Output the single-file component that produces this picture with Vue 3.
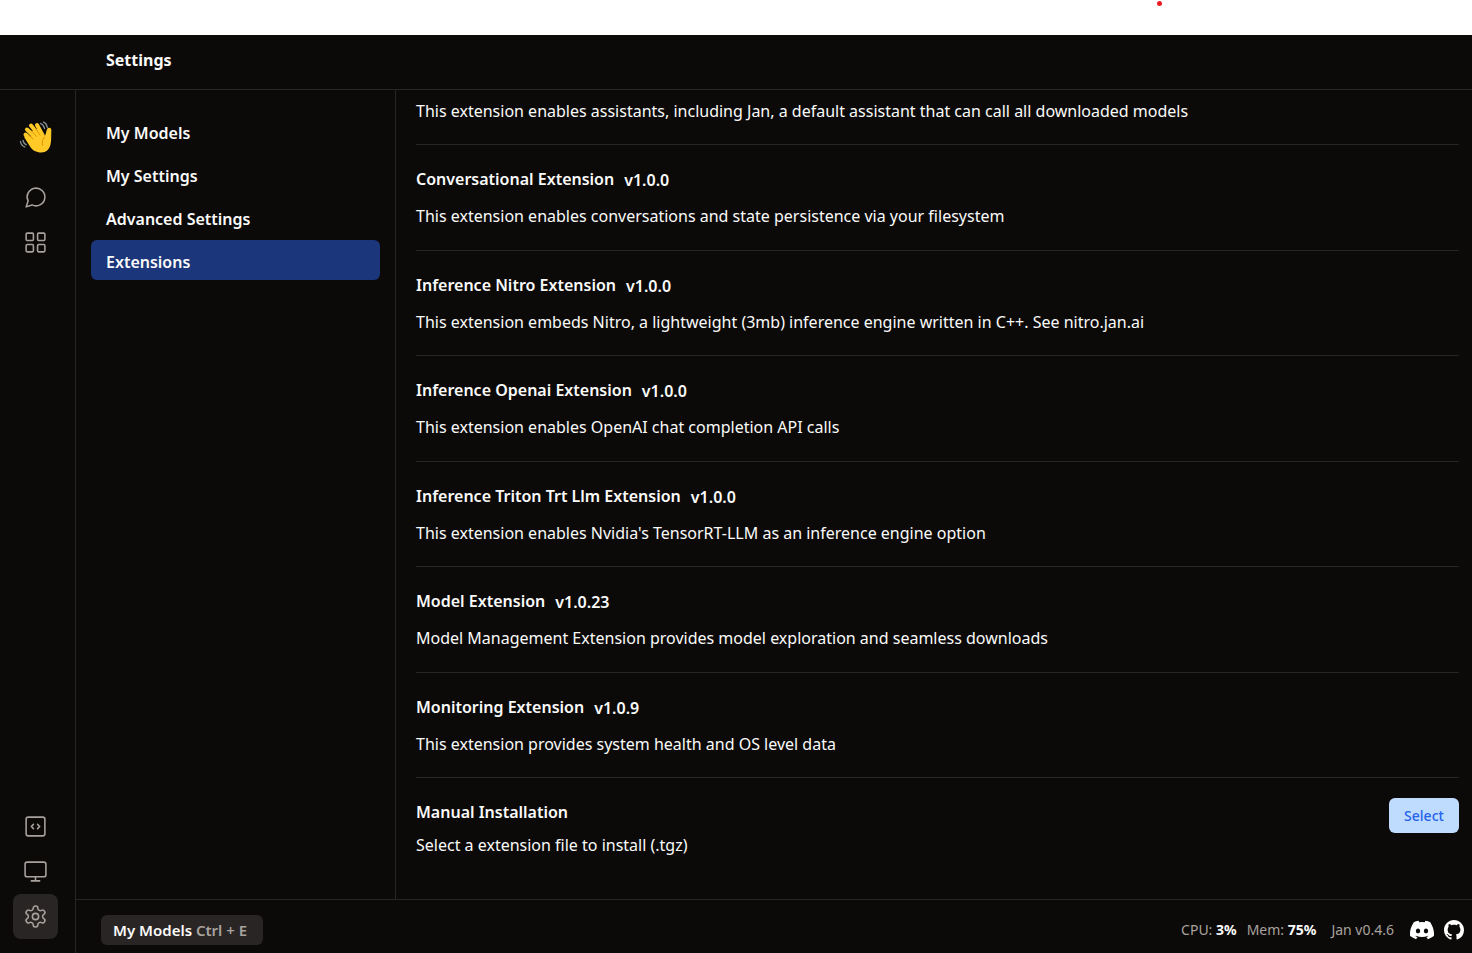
<script setup>
const sections = ['My Models', 'My Settings', 'Advanced Settings', 'Extensions']
const active = 'Extensions'

const extensions = [
  { name: 'Conversational Extension', version: 'v1.0.0', text: 'This extension enables conversations and state persistence via your filesystem' },
  { name: 'Inference Nitro Extension', version: 'v1.0.0', text: 'This extension embeds Nitro, a lightweight (3mb) inference engine written in C++. See nitro.jan.ai' },
  { name: 'Inference Openai Extension', version: 'v1.0.0', text: 'This extension enables OpenAI chat completion API calls' },
  { name: 'Inference Triton Trt Llm Extension', version: 'v1.0.0', text: "This extension enables Nvidia's TensorRT-LLM as an inference engine option" },
  { name: 'Model Extension', version: 'v1.0.23', text: 'Model Management Extension provides model exploration and seamless downloads' },
  { name: 'Monitoring Extension', version: 'v1.0.9', text: 'This extension provides system health and OS level data' },
]
</script>

<template>
  <div class="window">
    <div class="strip"><span class="dot"></span></div>
    <header class="titlebar"><h1>Settings</h1></header>
    <div class="shell">
      <nav class="rail" aria-label="Main">
        <div class="group">
          <div class="wave">
            <svg width="34" height="34" viewBox="0 0 34 34" aria-hidden="true">
              <g fill="none" stroke="#ffc928" stroke-width="4" stroke-linecap="round">
                <path d="M6.500 14.500 16 23" />
                <path d="M8 9.500 18 19" />
                <path d="M12 5.500 21 16.500" />
                <path d="M18 5 24 16" />
              </g>
              <path fill="#ffc928" d="M6 18.500C4.200 16.500 6.500 14.300 8.600 15.800L13 19 11 12 19 9 24.500 18.500C26 16.500 26.800 14 27.500 10.800C28 8.400 29.200 7.400 30.600 7.800C32.400 8.300 32.500 10 32.300 12C32 16 32.600 20 31.500 24.500C30.200 29.600 27 32.500 22.500 32.500C17 32.500 13.500 30 11.500 27.200Z" />
              <g fill="none" stroke="#e59600" stroke-width="1" stroke-linecap="round">
                <path d="m9.500 15 4.500 4M12 10.500l5.500 6M16.500 8.500l4.500 6.500" />
                <path d="M25.500 17.500C23.600 19 22.800 21.500 23.500 25.500" />
              </g>
              <g fill="none" stroke="#8a9499" stroke-width="1.300" stroke-linecap="round">
                <path d="M21.500 3.500c2.200.8 3.600 2.600 4 5M24.500 2.200c2.200 1 3.500 2.800 3.700 5.300M1.500 21.500c.4 2.600 1.900 4.500 4.300 5.500M4 20.500c.4 2 1.500 3.400 3.200 4.200" />
              </g>
            </svg>
          </div>
          <button class="icon" type="button" aria-label="Thread">
            <svg class="line" viewBox="0 0 24 24"><path d="m3 21 1.900-5.700a8.500 8.500 0 1 1 3.800 3.800z" /></svg>
          </button>
          <button class="icon" type="button" aria-label="Hub">
            <svg class="line" viewBox="0 0 24 24"><rect x="3" y="3" width="7" height="7" rx="1" /><rect x="14" y="3" width="7" height="7" rx="1" /><rect x="14" y="14" width="7" height="7" rx="1" /><rect x="3" y="14" width="7" height="7" rx="1" /></svg>
          </button>
        </div>
        <div class="group">
          <button class="icon" type="button" aria-label="Local API Server">
            <svg class="line" viewBox="0 0 24 24"><rect x="3" y="3" width="18" height="18" rx="2" /><path d="m10 10-2 2 2 2M14 14l2-2-2-2" /></svg>
          </button>
          <button class="icon" type="button" aria-label="System Monitor">
            <svg class="line" viewBox="0 0 24 24"><rect x="2" y="3" width="20" height="14" rx="2" /><path d="M8 21h8M12 17v4" /></svg>
          </button>
          <button class="icon current" type="button" aria-label="Settings">
            <svg class="line" viewBox="0 0 24 24"><path d="M12.220 2h-.44a2 2 0 0 0-2 2v.18a2 2 0 0 1-1 1.730l-.43.25a2 2 0 0 1-2 0l-.15-.08a2 2 0 0 0-2.730.73l-.22.38a2 2 0 0 0 .73 2.730l.15.1a2 2 0 0 1 1 1.720v.51a2 2 0 0 1-1 1.740l-.15.09a2 2 0 0 0-.73 2.730l.22.38a2 2 0 0 0 2.730.73l.15-.08a2 2 0 0 1 2 0l.43.25a2 2 0 0 1 1 1.730V20a2 2 0 0 0 2 2h.44a2 2 0 0 0 2-2v-.18a2 2 0 0 1 1-1.730l.43-.25a2 2 0 0 1 2 0l.15.08a2 2 0 0 0 2.730-.73l.22-.39a2 2 0 0 0-.73-2.730l-.15-.08a2 2 0 0 1-1-1.740v-.5a2 2 0 0 1 1-1.740l.15-.09a2 2 0 0 0 .73-2.730l-.22-.38a2 2 0 0 0-2.730-.73l-.15.08a2 2 0 0 1-2 0l-.43-.25a2 2 0 0 1-1-1.730V4a2 2 0 0 0-2-2z" /><circle cx="12" cy="12" r="3" /></svg>
          </button>
        </div>
      </nav>

      <div class="main">
        <div class="columns">
          <nav class="sections" aria-label="Settings sections">
            <button v-for="s in sections" :key="s" type="button" :class="{ on: s === active }">{{ s }}</button>
          </nav>
          <main class="content">
            <p class="first">This extension enables assistants, including Jan, a default assistant that can call all downloaded models</p>
            <div class="list">
              <article v-for="e in extensions" :key="e.name">
                <div class="name"><h2>{{ e.name }}</h2><span>{{ e.version }}</span></div>
                <p>{{ e.text }}</p>
              </article>
            </div>
            <section class="manual">
              <div>
                <h2>Manual Installation</h2>
                <p>Select a extension file to install (.tgz)</p>
              </div>
              <button type="button">Select</button>
            </section>
          </main>
        </div>
        <footer class="status">
          <button class="shortcut" type="button">My Models <span>Ctrl + E</span></button>
          <div class="stats">
            <span>CPU: <b>3%</b></span>
            <span>Mem: <b>75%</b></span>
            <span class="build">Jan v0.4.6</span>
            <a href="#discord" aria-label="Discord">
              <svg width="24" height="24" viewBox="0 0 24 24" fill="#fff"><path d="M20.317 4.370a19.791 19.791 0 0 0-4.885-1.515.074.074 0 0 0-.079.037c-.21.375-.444.864-.608 1.250a18.270 18.270 0 0 0-5.487 0 12.640 12.640 0 0 0-.617-1.250.077.077 0 0 0-.079-.037A19.736 19.736 0 0 0 3.677 4.370a.07.07 0 0 0-.032.027C.533 9.046-.32 13.580.099 18.058a.082.082 0 0 0 .031.057 19.900 19.900 0 0 0 5.993 3.030.078.078 0 0 0 .084-.028 14.090 14.090 0 0 0 1.226-1.994.076.076 0 0 0-.041-.106 13.107 13.107 0 0 1-1.872-.892.077.077 0 0 1-.008-.128 10.200 10.200 0 0 0 .372-.292.074.074 0 0 1 .077-.010c3.928 1.793 8.180 1.793 12.062 0a.074.074 0 0 1 .078.010c.12.098.246.198.373.292a.077.077 0 0 1-.006.127 12.299 12.299 0 0 1-1.873.892.077.077 0 0 0-.041.107c.36.698.772 1.362 1.225 1.993a.076.076 0 0 0 .084.028 19.839 19.839 0 0 0 6.002-3.030.077.077 0 0 0 .032-.054c.5-5.177-.838-9.674-3.549-13.660a.061.061 0 0 0-.031-.030zM8.020 15.330c-1.183 0-2.157-1.085-2.157-2.419 0-1.333.956-2.419 2.157-2.419 1.210 0 2.176 1.096 2.157 2.420 0 1.333-.956 2.418-2.157 2.418zm7.975 0c-1.183 0-2.157-1.085-2.157-2.419 0-1.333.955-2.419 2.157-2.419 1.210 0 2.176 1.096 2.157 2.420 0 1.333-.946 2.418-2.157 2.418z" /></svg>
            </a>
            <a href="#github" aria-label="GitHub">
              <svg width="20" height="20" viewBox="0 0 16 16" fill="#fff"><path d="M8 0C3.580 0 0 3.580 0 8c0 3.540 2.290 6.530 5.470 7.590.4.07.55-.17.55-.38 0-.19-.01-.82-.01-1.490-2.010.37-2.530-.49-2.690-.94-.09-.23-.48-.94-.82-1.130-.28-.15-.68-.52-.01-.53.63-.01 1.080.58 1.230.82.72 1.210 1.870.87 2.330.66.07-.52.28-.87.51-1.070-1.780-.2-3.640-.89-3.640-3.950 0-.87.31-1.590.82-2.150-.08-.2-.36-1.020.08-2.120 0 0 .67-.21 2.200.82.64-.18 1.320-.27 2-.27s1.360.09 2 .27c1.530-1.040 2.200-.82 2.200-.82.44 1.100.16 1.920.08 2.120.51.56.82 1.270.82 2.150 0 3.070-1.870 3.750-3.650 3.950.29.25.54.73.54 1.480 0 1.070-.01 1.930-.01 2.200 0 .21.15.46.55.38A8.013 8.013 0 0 0 16 8c0-4.420-3.580-8-8-8z" /></svg>
            </a>
          </div>
        </footer>
      </div>
    </div>
  </div>
</template>

<style>
body { margin: 0; background: #0c0a09; }
</style>

<style scoped>
.window {
  display: flex;
  flex-direction: column;
  min-height: 100vh;
  background: #0c0a09;
  color: #fafaf9;
  font-family: "Noto Sans", "Open Sans", sans-serif;
  font-size: 16px;
  line-height: 24px;
}
h1, h2, p { margin: 0; font-size: inherit; }
h1 { font-weight: 700; }
h2 { font-weight: 600; }
button { border: 0; padding: 0; background: none; color: inherit; font: inherit; cursor: pointer; }
.strip { position: relative; height: 35px; background: #fff; }
.dot { position: absolute; left: 1157px; top: 1px; width: 5px; height: 5px; border-radius: 50%; background: #ed1c24; }
.titlebar {
  display: flex;
  align-items: center;
  box-sizing: border-box;
  height: 55px;
  padding: 0 106px 4px;
  border-bottom: 1px solid #292524;
}
.shell { display: flex; flex: 1; }
.rail {
  display: flex;
  flex-direction: column;
  justify-content: space-between;
  padding: 30px 17px 14px 13px;
  border-right: 1px solid #292524;
}
.group { display: flex; flex-direction: column; }
.wave { display: flex; justify-content: center; height: 55px; }
.icon {
  display: flex;
  align-items: center;
  justify-content: center;
  width: 45px;
  height: 45px;
  border-radius: 8px;
  color: #a8a29e;
}
.icon.current { background: #292524; }
.line { width: 25px; height: 25px; fill: none; stroke: currentColor; stroke-width: 1.500; stroke-linecap: round; stroke-linejoin: round; }
.main { display: flex; flex-direction: column; flex: 1; min-width: 0; }
.columns { display: flex; flex: 1; }
.sections {
  display: flex;
  flex-direction: column;
  gap: 3px;
  box-sizing: border-box;
  width: 320px;
  padding: 21px 15px;
  border-right: 1px solid #292524;
}
.sections button { height: 40px; padding: 4px 15px 0; border-radius: 6px; text-align: left; font-weight: 600; }
.sections .on { background: #1b367a; }
.content { display: flex; flex-direction: column; flex: 1; min-width: 0; padding: 0 13px 0 20px; }
.first { padding: 9px 0 21px; border-bottom: 1px solid #292524; }
.list { display: grid; grid-auto-rows: 1fr; flex: 1; }
.list article { padding-top: 22px; border-bottom: 1px solid #292524; }
.name { display: flex; gap: 10px; margin-bottom: 11px; font-weight: 600; }
.name span { line-height: 26px; }
.manual { display: flex; align-items: flex-start; justify-content: space-between; padding: 20px 0 42px; }
.manual h2 { padding: 2px 0 9px; }
.manual button { width: 70px; height: 35px; border-radius: 6px; background: #bfdbfe; color: #2563eb; font-size: 14px; font-weight: 500; }
.status {
  display: flex;
  align-items: center;
  justify-content: space-between;
  padding: 15px 8px 8px 25px;
  border-top: 1px solid #292524;
  font-size: 14px;
  line-height: 30px;
}
.shortcut { height: 30px; padding: 0 16px 0 12px; border-radius: 6px; background: #292524; font-size: 15px; font-weight: 600; }
.shortcut span { color: #a8a29e; }
.stats { display: flex; align-items: center; gap: 10px; color: #a8a29e; }
.stats b { color: #fafaf9; font-weight: 700; }
.build { margin: 0 6px 0 5px; }
.stats a { display: flex; }
</style>
